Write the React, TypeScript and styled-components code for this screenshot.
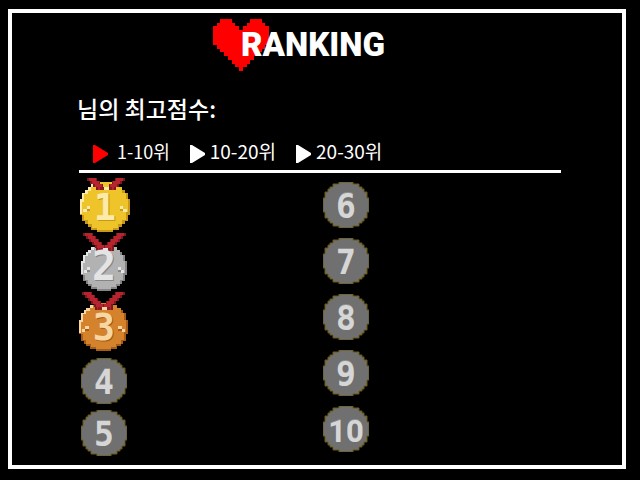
import React, { useState } from 'react';
import styled, { createGlobalStyle } from 'styled-components';

const GlobalStyle = createGlobalStyle`
  * { box-sizing: border-box; }
  html, body { margin: 0; background: #000; }
  body {
    color: #fff;
    font-family: "Noto Sans CJK KR", "Noto Sans", sans-serif;
  }
`;

const Page = styled.div`
  display: flex;
  min-height: 100vh;
  padding: 9px 14px 11px 8px;
`;

const Frame = styled.main`
  flex: 1;
  border: 4px solid #fff;
  background: #000;
`;

const Header = styled.header`
  display: flex;
  justify-content: center;
  padding: 6px 36px 0 0;
`;

const Title = styled.h1`
  margin: 6px 0 0 -28px;
  position: relative;
  font: 900 33px/40px Roboto, sans-serif;
  height: 40px;
`;

const Content = styled.section`
  padding: 0 61px 0 67px;
`;

const BestScore = styled.p`
  margin: 21px 0 0 -2px;
  font-size: 23px;
  font-weight: 500;
  line-height: 32px;
`;

const Tabs = styled.nav`
  display: flex;
  align-items: center;
  gap: 20px;
  margin-top: 12px;
  padding-left: 14px;
  height: 34px;
`;

const Tab = styled.button<{ $active: boolean }>`
  display: flex;
  align-items: center;
  gap: ${(p) => (p.$active ? 8 : 4)}px;
  height: 28px;
  margin-bottom: 4px;
  padding: 0;
  border: 0;
  background: none;
  color: #fff;
  font: inherit;
  font-size: ${(p) => (p.$active ? 18 : 19)}px;
  line-height: 26px;
  white-space: nowrap;
  cursor: pointer;

  svg {
    fill: ${(p) => (p.$active ? '#ff0000' : '#fff')};
    margin-top: 5px;
  }
`;

const Board = styled.div`
  display: grid;
  grid-template-columns: 1fr 1fr;
  gap: 6px;
  border-top: 3px solid #fff;
`;

const Column = styled.ol<{ $gap: number; $top: number }>`
  display: flex;
  flex-direction: column;
  align-items: flex-start;
  gap: ${(p) => p.$gap}px;
  margin: 0;
  padding: ${(p) => p.$top}px 0 0;
  list-style: none;
`;

const Place = styled.li<{ $medal?: boolean }>`
  display: flex;
  justify-content: center;
  min-width: ${(p) => (p.$medal ? 52 : 46)}px;

  svg { display: block; }
`;

const CoinPlace = styled(Place)<{ $inset?: boolean }>`
  padding: ${(p) => (p.$inset ? '5px 0 0 2px' : '0')};

  &:nth-child(4) { padding-top: ${(p) => (p.$inset ? 6 : 0)}px; }
`;

const Numeral = styled.text<{ $size: number; $face?: string }>`
  font: 700 ${(p) => p.$size}px ${(p) => p.$face ?? '"DejaVu Sans Mono"'}, monospace;
  text-anchor: middle;
`;

const HEART = [
  [[2, 3], [10, 3]],
  [[1, 5], [9, 5]],
  [[0, 7], [8, 7]],
  [[0, 15]], [[0, 15]], [[0, 15]], [[0, 15]],
  [[1, 13]], [[2, 11]], [[3, 9]], [[4, 7]], [[5, 5]], [[6, 3]], [[7, 1]],
];

function Heart() {
  return (
    <svg width="56" height="52" viewBox="0 0 15 14" preserveAspectRatio="none" shapeRendering="crispEdges" aria-hidden="true">
      {HEART.map((row, y) =>
        row.map(([x, w]) => <rect key={`${x}-${y}`} x={x} y={y} width={w} height="1" fill="#ff0000" />),
      )}
    </svg>
  );
}

/* Stepped circle outline for a disc of 46 units. */
const CORNER = [[0, 16], [2, 16], [2, 10], [5, 10], [5, 7], [7, 7], [7, 5], [10, 5], [10, 2], [16, 2], [16, 0]];
const back = [...CORNER].reverse();
const DISC = [
  ...CORNER,
  ...back.map(([x, y]) => [46 - x, y]),
  ...CORNER.map(([x, y]) => [46 - x, 46 - y]),
  ...back.map(([x, y]) => [x, 46 - y]),
].map((p) => p.join(',')).join(' ');

function Coin({ rank }: { rank: number }) {
  const wide = rank > 9;
  const size = wide ? 31 : 33;
  const face = wide ? 'Roboto' : undefined;
  return (
    <svg width="46" height="46" viewBox="0 0 46 46">
      <polygon points={DISC} fill="#707070" stroke="#6b5a14" strokeWidth="1" />
      <Numeral x="23" y="35" $size={size} $face={face} fill="#8e8e8e">{rank}</Numeral>
      <Numeral x="23" y="36" $size={size} $face={face} fill="#d6d6d6">{rank}</Numeral>
    </svg>
  );
}

interface MedalSpec {
  rank: number;
  height: number;
  disc: { x: number; y: number; w: number; h: number };
  ribbon: { left: number; right: number; rows: number };
  digit: { x: number; y: number; size: number };
  fill: string;
  shade: string;
  light: string;
}

const MEDALS: MedalSpec[] = [
  {
    rank: 1, height: 54,
    disc: { x: 1, y: 4, w: 50, h: 50 },
    ribbon: { left: 9, right: 45, rows: 4 },
    digit: { x: 26, y: 42, size: 37 },
    fill: '#efc42b', shade: '#c8981a', light: '#fbeaa8',
  },
  {
    rank: 2, height: 58,
    disc: { x: 2, y: 12, w: 46, h: 46 },
    ribbon: { left: 5, right: 46, rows: 6 },
    digit: { x: 25, y: 47, size: 40 },
    fill: '#b2b2b2', shade: '#858585', light: '#e4e4e4',
  },
  {
    rank: 3, height: 59,
    disc: { x: 0, y: 11, w: 49, h: 48 },
    ribbon: { left: 4, right: 45, rows: 6 },
    digit: { x: 25, y: 48, size: 37 },
    fill: '#d4832c', shade: '#a45c18', light: '#f7d6a2',
  },
];

function Medal({ rank, height, disc, ribbon, digit, fill, shade, light }: MedalSpec) {
  const sx = disc.w / 46;
  const sy = disc.h / 46;
  const mid = (ribbon.left + ribbon.right) / 2;
  const knot = ribbon.rows * 3;
  return (
    <svg width="52" height={height} viewBox={`0 0 52 ${height}`}>
      <g transform={`translate(${disc.x} ${disc.y}) scale(${sx} ${sy})`} shapeRendering="crispEdges">
        <polygon points={DISC} fill={shade} />
        <path d="M2 10h3v-3h2v-2h3v-3h6v-2h14v2h6v3h3v5h3v6h2v12h-2v7h-3v4h-4v3h-5v2H16v-2h-5v-3H7v-4H4v-5H2z" fill={fill} />
        <path d="M0 16h2v-6h3v-3h2v4H4v7H2v11H0zM7 5h3v-3h3v3h-3v3H7z" fill={light} />
        <path d="M3 25h3v3H3zM6 22h3v3H6zM37 22h3v3h-3zM40 25h3v3h-3z" fill={light} />
        <path d="M6 25h3v2H6zM37 25h3v2h-3z" fill={shade} />
      </g>
      <g shapeRendering="crispEdges">
        {Array.from({ length: ribbon.rows }, (_, i) => {
          const step = i * 3;
          const l = Math.min(ribbon.left + step, mid - 8);
          const r = Math.max(ribbon.right - step, mid + 8);
          return (
            <g key={i}>
              <rect x={l - 1} y={i * 3} width="10" height="3" fill="#7c1820" />
              <rect x={l + 1} y={i * 3} width="7" height="3" fill="#b8242e" />
              <rect x={r - 9} y={i * 3} width="10" height="3" fill="#7c1820" />
              <rect x={r - 8} y={i * 3} width="7" height="3" fill="#b8242e" />
            </g>
          );
        })}
        <rect x={mid - 6} y={knot - 3} width="12" height="3" fill="#8c1c24" />
        <rect x={mid - 2} y={knot - 3} width="5" height="3" fill={light} />
      </g>
      <Numeral x={digit.x + 1} y={digit.y + 1} $size={digit.size} fill={shade}>{rank}</Numeral>
      <Numeral x={digit.x} y={digit.y} $size={digit.size} fill={light}>{rank}</Numeral>
    </svg>
  );
}

const RANGES = ['1-10위', '10-20위', '20-30위'];

export default function App() {
  const [active, setActive] = useState(0);
  return (
    <Page>
      <GlobalStyle />
      <Frame>
        <Header>
          <Heart />
          <Title>RANKING</Title>
        </Header>
        <Content>
          <BestScore>님의 최고점수:</BestScore>
          <Tabs>
            {RANGES.map((label, i) => (
              <Tab key={label} type="button" $active={i === active} aria-pressed={i === active} onClick={() => setActive(i)}>
                <svg width="16" height="18" viewBox="0 0 16 18" aria-hidden="true">
                  <path d="M0 0h2L15 8v2L2 18H0z" />
                </svg>
                {label}
              </Tab>
            ))}
          </Tabs>
          <Board>
            <Column $gap={1} $top={5}>
              {MEDALS.map((m) => (
                <Place key={m.rank} $medal><Medal {...m} /></Place>
              ))}
              {[4, 5].map((rank) => (
                <CoinPlace key={rank} $inset><Coin rank={rank} /></CoinPlace>
              ))}
            </Column>
            <Column $gap={10} $top={9}>
              {[6, 7, 8, 9, 10].map((rank) => (
                <CoinPlace key={rank}><Coin rank={rank} /></CoinPlace>
              ))}
            </Column>
          </Board>
        </Content>
      </Frame>
    </Page>
  );
}
